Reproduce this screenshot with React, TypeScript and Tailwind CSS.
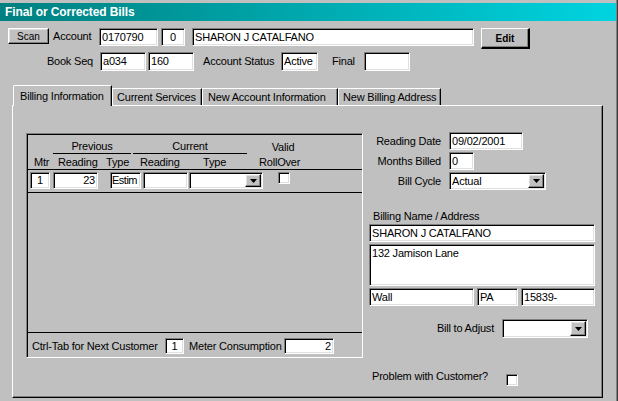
import React from "react";

const sunk =
  "bg-white border border-t-[#808080] border-l-[#808080] border-b-white border-r-white shadow-[inset_1px_1px_0_#000,inset_-1px_-1px_0_#dfdfdf]";
const raised =
  "bg-[#c0c0c0] border border-t-white border-l-white border-b-black border-r-black shadow-[inset_-1px_-1px_0_#808080,inset_1px_1px_0_#dfdfdf]";

function Field({
  cls = "",
  children,
}: {
  cls?: string;
  children?: React.ReactNode;
}) {
  return (
    <div className={`${sunk} flex items-center px-[2px] overflow-hidden whitespace-nowrap shrink-0 ${cls}`}>
      {children}
    </div>
  );
}

function Select({ cls = "", value = "" }: { cls?: string; value?: string }) {
  return (
    <div className={`${sunk} flex items-stretch p-[1px] shrink-0 ${cls}`}>
      <div className="flex-1 flex items-center px-[1px] overflow-hidden whitespace-nowrap">{value}</div>
      <div className={`${raised} w-[16px] flex items-center justify-center`}>
        <svg width="7" height="4" viewBox="0 0 7 4">
          <polygon points="0,0 7,0 3.5,4" fill="#000" />
        </svg>
      </div>
    </div>
  );
}

function Check({ cls = "" }: { cls?: string }) {
  return <div className={`${sunk} w-[12px] h-[12px] shrink-0 ${cls}`} />;
}

export default function App() {
  return (
    <div className="w-[618px] h-[401px] overflow-hidden bg-[#c0c0c0] text-black font-['Liberation_Sans',Arial,sans-serif] text-[11px] tracking-[-0.2px] leading-[13px] flex flex-col pr-[2px] shadow-[inset_-1px_0_0_#404040,inset_-2px_0_0_#808080]">
      {/* Title bar */}
      <div className="mt-[3px] h-[18px] bg-linear-to-r from-[#008080] to-[#00d4e0] text-white font-bold text-[12px] tracking-[-0.1px] flex items-center pl-[5px]">
        Final or Corrected Bills
      </div>

      {/* Row 1 */}
      <div className="mt-[7px] h-[21px] flex items-start">
        <div className={`${raised} ml-[8px] w-[41px] h-[16px] text-[10px] tracking-normal flex items-center justify-center`}>
          Scan
        </div>
        <span className="ml-[4px] mt-[2px] w-[46px] whitespace-nowrap">Account</span>
        <Field cls="w-[59px] h-[18px]">0170790</Field>
        <Field cls="ml-[3px] w-[24px] h-[18px] justify-center">0</Field>
        <Field cls="ml-[7px] w-[282px] h-[18px]">SHARON J CATALFANO</Field>
        <div className="ml-[7px] w-[49px] h-[21px] bg-[#c0c0c0] border-t border-l border-t-white border-l-white border-r-2 border-b-2 border-r-black border-b-black shadow-[inset_-1px_-1px_0_#808080] font-bold text-[10px] tracking-normal flex items-center justify-center">
          Edit
        </div>
      </div>

      {/* Row 2 */}
      <div className="mt-[3px] h-[19px] flex items-center">
        <span className="w-[93px] text-right whitespace-nowrap">Book Seq</span>
        <Field cls="ml-[7px] w-[46px] h-[19px]">a034</Field>
        <Field cls="ml-[2px] w-[46px] h-[19px]">160</Field>
        <span className="ml-[9px] w-[78px] whitespace-nowrap">Account Status</span>
        <Field cls="w-[37px] h-[19px]">Active</Field>
        <span className="ml-[14px] w-[32px] whitespace-nowrap">Final</span>
        <Field cls="w-[46px] h-[19px]" />
      </div>

      {/* Tabs */}
      <div className="mt-[14px] ml-[13px] h-[20px] flex items-end">
        <div className="relative z-10 -mb-[1px] h-[21px] w-[99px] bg-[#c0c0c0] border-t border-l border-r border-t-white border-l-white border-r-black rounded-tl-[2px] shadow-[inset_-1px_0_0_#808080] flex items-center pl-[6px] whitespace-nowrap">
          Billing Information
        </div>
        <div className="h-[17px] w-[90px] border-t border-l border-r border-t-white border-l-white border-r-black shadow-[inset_-1px_0_0_#808080] flex items-center pl-[4px] whitespace-nowrap">
          Current Services
        </div>
        <div className="h-[17px] w-[136px] border-t border-l border-r border-t-white border-l-white border-r-black shadow-[inset_-1px_0_0_#808080] flex items-center pl-[5px] whitespace-nowrap">
          New Account Information
        </div>
        <div className="h-[17px] w-[103px] border-t border-l border-r border-t-white border-l-white border-r-black shadow-[inset_-1px_0_0_#808080] flex items-center pl-[4px] whitespace-nowrap">
          New Billing Address
        </div>
      </div>

      {/* Panel */}
      <div className="ml-[12px] w-[591px] h-[293px] border border-t-white border-l-white border-r-black border-b-black shadow-[inset_-1px_-1px_0_#808080] flex items-start pt-[26px]">
        {/* Grid box */}
        <div className="ml-[13px] mt-[1px] w-[337px] h-[225px] flex flex-col border border-t-[#808080] border-l-[#808080] border-b-white border-r-white shadow-[inset_1px_1px_0_#000]">
          <div className="pt-[6px] border-b border-b-black">
            <div className="flex items-start">
              <div className="ml-[26px] w-[78px] h-[14px] text-center border-b border-b-black">Previous</div>
              <div className="ml-[2px] w-[114px] h-[14px] text-center border-b border-b-black">Current</div>
              <div className="ml-[15px] w-[42px] mt-[1px] text-center">Valid</div>
            </div>
            <div className="mt-[2px] h-[13px] flex whitespace-nowrap">
              <span className="ml-[7px] w-[24px]">Mtr</span>
              <span className="w-[48px]">Reading</span>
              <span className="w-[34px]">Type</span>
              <span className="w-[63px]">Reading</span>
              <span className="w-[56px]">Type</span>
              <span>RollOver</span>
            </div>
          </div>
          <div className="pt-[2px] pb-[3px] flex items-start border-b border-b-black">
            <Field cls="ml-[3px] w-[20px] h-[17px] justify-center">1</Field>
            <Field cls="ml-[3px] w-[45px] h-[17px] justify-end">23</Field>
            <Field cls="ml-[12px] w-[31px] h-[17px] !px-[1px] tracking-[-0.5px]">Estim</Field>
            <Field cls="ml-[2px] w-[45px] h-[17px]" />
            <Select cls="ml-[1px] w-[74px] h-[17px]" />
            <Check cls="ml-[15px]" />
          </div>
          <div className="flex-1" />
          <div className="border-t border-t-black pt-[5px] pb-[3px] flex items-center">
            <span className="ml-[5px] w-[133px] whitespace-nowrap">Ctrl-Tab for Next Customer</span>
            <Field cls="w-[19px] h-[16px] justify-center">1</Field>
            <span className="ml-[5px] w-[95px] whitespace-nowrap">Meter Consumption</span>
            <Field cls="w-[50px] h-[16px] justify-end">2</Field>
          </div>
        </div>

        {/* Right column */}
        <div className="ml-[6px] w-[226px] flex flex-col">
          <div className="flex items-center">
            <span className="w-[72px] text-right whitespace-nowrap">Reading Date</span>
            <Field cls="ml-[8px] w-[74px] h-[18px]">09/02/2001</Field>
          </div>
          <div className="mt-[2px] flex items-center">
            <span className="w-[72px] text-right whitespace-nowrap">Months Billed</span>
            <Field cls="ml-[8px] w-[25px] h-[18px]">0</Field>
          </div>
          <div className="mt-[2px] flex items-center">
            <span className="w-[72px] text-right whitespace-nowrap">Bill Cycle</span>
            <Select cls="ml-[8px] w-[97px] h-[18px]" value="Actual" />
          </div>
          <div className="mt-[20px] pl-[4px] whitespace-nowrap">Billing Name / Address</div>
          <Field cls="mt-[1px] w-[226px] h-[18px]">SHARON J CATALFANO</Field>
          <div className={`${sunk} mt-[2px] w-[226px] h-[42px] px-[2px] pt-[2px]`}>132 Jamison Lane</div>
          <div className="mt-[2px] flex">
            <Field cls="w-[105px] h-[18px]">Wall</Field>
            <Field cls="ml-[3px] w-[41px] h-[18px]">PA</Field>
            <Field cls="ml-[3px] w-[74px] h-[18px]">15839-</Field>
          </div>
          <div className="mt-[13px] flex items-center">
            <span className="w-[125px] text-right whitespace-nowrap">Bill to Adjust</span>
            <Select cls="ml-[8px] w-[86px] h-[19px]" />
          </div>
          <div className="mt-[32px] flex items-start">
            <span className="pl-[3px] w-[137px] whitespace-nowrap">Problem with Customer?</span>
            <Check cls="mt-[4px]" />
          </div>
        </div>
      </div>
    </div>
  );
}
